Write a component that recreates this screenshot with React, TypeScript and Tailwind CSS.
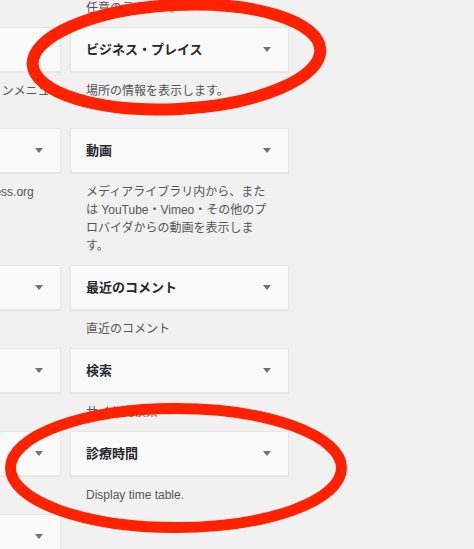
import React from "react";

type Widget = {
  title: string;
  lines: string[];
  // right-align the first line (only used for the clipped left column)
  endPad?: string;
};

type Row = {
  left?: Widget;
  right?: Widget;
};

const rows: Row[] = [
  {
    left: { title: "ギャラリー", lines: ["ギャラリー"] },
    right: { title: "テキスト", lines: ["任意のテキスト。"] },
  },
  {
    left: {
      title: "カスタムメニュー",
      lines: ["サイドバーにナビゲーションメニュ", "ーを追加。"],
      endPad: "pr-[1px]",
    },
    right: { title: "ビジネス・プレイス", lines: ["場所の情報を表示します。"] },
  },
  {
    left: {
      title: "メタ情報",
      lines: ["ログイン、RSS、WordPress.org", "へのリンク。"],
      endPad: "pr-[12px]",
    },
    right: {
      title: "動画",
      lines: [
        "メディアライブラリ内から、また",
        "は YouTube・Vimeo・その他のプ",
        "ロバイダからの動画を表示しま",
        "す。",
      ],
    },
  },
  {
    left: { title: "最近の投稿", lines: ["最近の投稿"] },
    right: { title: "最近のコメント", lines: ["直近のコメント"] },
  },
  {
    left: { title: "固定ページ", lines: ["固定ページ"] },
    right: { title: "検索", lines: ["サイト内検索"] },
  },
  {
    left: { title: "画像", lines: ["画像"] },
    right: { title: "診療時間", lines: ["Display time table."] },
  },
  {
    left: { title: "音声", lines: ["音声"] },
  },
];

const Arrow = () => (
  <svg width="8" height="5" viewBox="0 0 8 5" className="shrink-0">
    <polygon points="0,0 8,0 4,5" fill="#6e7175" />
  </svg>
);

const WidgetItem = ({ widget }: { widget: Widget }) => (
  <div>
    <div className="h-[45px] flex items-center justify-between pl-[15px] pr-[17px] bg-[#fafafa] border border-[#e5e5e5] shadow-[0_1px_1px_rgba(0,0,0,0.04)]">
      <span className="text-[13px] font-bold text-[#23282d] whitespace-nowrap">{widget.title}</span>
      <Arrow />
    </div>
    <div className="mt-[10px] mb-[10px] px-[16px] text-[12px] leading-[18px] text-[#555555]">
      {widget.lines.map((line, i) => (
        <div
          key={i}
          className={`whitespace-nowrap ${i === 0 && widget.endPad ? "text-right " + widget.endPad : ""}`}
        >
          {line}
        </div>
      ))}
    </div>
  </div>
);

export default function App() {
  return (
    <div className="relative w-[474px] h-[549px] overflow-hidden bg-[#f1f1f1] font-['Liberation_Sans','Noto_Sans_CJK_JP',sans-serif]">
      <div className="grid grid-cols-[219px_219px] gap-x-[9px] ml-[-158px] mt-[-56px]">
        {rows.map((row, i) => (
          <React.Fragment key={i}>
            <div>{row.left && <WidgetItem widget={row.left} />}</div>
            <div>{row.right && <WidgetItem widget={row.right} />}</div>
          </React.Fragment>
        ))}
      </div>

      {/* hand-drawn highlight marks */}
      <svg className="absolute inset-0 pointer-events-none" width="474" height="549" viewBox="0 0 474 549">
        <ellipse
          cx="176.5"
          cy="57"
          rx="144"
          ry="52"
          fill="none"
          stroke="#ff2200"
          strokeWidth="12"
          transform="rotate(-3 176.5 57)"
        />
        <ellipse cx="176" cy="468" rx="165.5" ry="59.5" fill="none" stroke="#ff2200" strokeWidth="11" />
      </svg>
    </div>
  );
}
